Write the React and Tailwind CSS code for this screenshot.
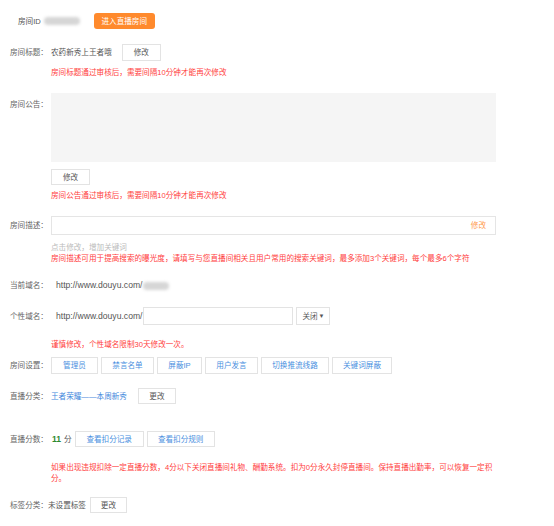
import React from 'react';

const Label = ({ children, className = '' }) => (
  <span className={`w-[41px] shrink-0 text-[#666] ${className}`}>{children}</span>
);

const GhostBtn = ({ children, className = '' }) => (
  <button className={`flex items-center justify-center border border-[#e3e3e3] bg-white text-[#555] ${className}`}>
    {children}
  </button>
);

const BlueBtn = ({ children, className = '' }) => (
  <button className={`flex items-center justify-center border border-[#e3e3e3] bg-white text-[#4a8fe0] ${className}`}>
    {children}
  </button>
);

const Blur = ({ className = '' }) => (
  <span className={`inline-block rounded-sm bg-[#d6d6d6] blur-[1.5px] ${className}`} />
);

const Warn = ({ children, className = '' }) => (
  <p className={`h-[11px] pl-[41px] leading-[11px] text-[#ff3d3d] ${className}`}>{children}</p>
);

export default function App() {
  const settings = [
    ['管理员', 'w-[47px]'],
    ['禁言名单', 'w-[53px]'],
    ['屏蔽IP', 'w-[45px]'],
    ['用户发言', 'w-[53px]'],
    ['切换推流线路', 'w-[68px]'],
    ['关键词屏蔽', 'w-[60px]'],
  ];

  return (
    <div
      className="h-[526px] w-[554px] overflow-hidden bg-white pl-[10px] text-[7.6px] leading-[11px]"
      style={{ fontFamily: '"Liberation Sans", "Noto Sans CJK SC", sans-serif' }}
    >
      {/* room id */}
      <div className="mt-[13px] flex h-[16px] items-center">
        <span className="ml-[8px] text-[#555]">房间ID</span>
        <Blur className="ml-[3px] h-[8px] w-[36px]" />
        <button className="ml-[14px] flex h-[16px] w-[61px] items-center justify-center rounded-[3px] bg-[#ff8a2d] text-white">
          进入直播房间
        </button>
      </div>

      {/* title */}
      <div className="mt-[15px] flex h-[17px] items-center">
        <Label>房间标题：</Label>
        <span className="text-[#555]">农药新秀上王者哦</span>
        <GhostBtn className="ml-[10px] h-[17px] w-[39px]">修改</GhostBtn>
      </div>
      <Warn className="mt-[6px]">房间标题通过审核后，需要间隔10分钟才能再次修改</Warn>

      {/* notice */}
      <div className="mt-[15px] flex">
        <Label className="pt-[6px]">房间公告：</Label>
        <div className="h-[69px] w-[445px] bg-[#f5f5f5]" />
      </div>
      <div className="mt-[7px] pl-[41px]">
        <GhostBtn className="h-[16px] w-[39px]">修改</GhostBtn>
      </div>
      <Warn className="mt-[5px]">房间公告通过审核后，需要间隔10分钟才能再次修改</Warn>

      {/* description */}
      <div className="mt-[15px] flex h-[19px] items-center">
        <Label>房间描述：</Label>
        <div className="flex h-[19px] w-[445px] items-center justify-end border border-[#e5e5e5] pr-[9px] text-[#ff9a4d]">
          修改
        </div>
      </div>
      <p className="mt-[7px] h-[11px] pl-[41px] text-[#bbb]">点击修改，增加关键词</p>
      <Warn>房间描述可用于提高搜索的曝光度，请填写与您直播间相关且用户常用的搜索关键词，最多添加3个关键词，每个最多6个字符</Warn>

      {/* current domain */}
      <div className="mt-[16px] flex h-[11px] items-center">
        <Label>当前域名：</Label>
        <span className="ml-[5px] text-[8.6px] text-[#555]">http://www.douyu.com/</span>
        <Blur className="ml-[1px] h-[8px] w-[26px]" />
      </div>

      {/* custom domain */}
      <div className="mt-[16px] flex h-[18px] items-center">
        <Label>个性域名：</Label>
        <span className="ml-[5px] text-[8.6px] text-[#555]">http://www.douyu.com/</span>
        <div className="ml-[1px] h-[18px] w-[150px] border border-[#e3e3e3]" />
        <div className="ml-[3px] flex h-[18px] w-[34px] items-center justify-between border border-[#e3e3e3] px-[5px] text-[#555]">
          <span>关闭</span>
          <span className="text-[6px]">▼</span>
        </div>
      </div>
      <Warn className="mt-[14px]">谨慎修改，个性域名限制30天修改一次。</Warn>

      {/* room settings */}
      <div className="mt-[7px] flex h-[17px] items-center">
        <Label>房间设置：</Label>
        <div className="flex gap-[3px]">
          {settings.map(([name, w]) => (
            <BlueBtn key={name} className={`h-[17px] ${w}`}>{name}</BlueBtn>
          ))}
        </div>
      </div>

      {/* category */}
      <div className="mt-[14px] flex h-[16px] items-center">
        <Label>直播分类：</Label>
        <span className="text-[#3f87dc]">王者荣耀——本周新秀</span>
        <GhostBtn className="ml-[11px] h-[16px] w-[38px]">更改</GhostBtn>
      </div>

      {/* score */}
      <div className="mt-[27px] flex h-[16px] items-center">
        <Label>直播分数：</Label>
        <span className="ml-[1px] text-[8.6px] font-semibold text-[#2f8a2f]">11</span>
        <span className="ml-[3px] text-[#555]">分</span>
        <BlueBtn className="ml-[3px] h-[16px] w-[69px]">查看扣分记录</BlueBtn>
        <BlueBtn className="ml-[3px] h-[16px] w-[68px]">查看扣分规则</BlueBtn>
      </div>
      <p className="mt-[15px] whitespace-nowrap pl-[41px] leading-[11px] text-[#ff3d3d]">
        如果出现违规扣除一定直播分数，4分以下关闭直播间礼物、酬勤系统。扣为0分永久封停直播间。保持直播出勤率，可以恢复一定积
        <br />
        分。
      </p>

      {/* tag */}
      <div className="mt-[13px] flex h-[16px] items-center">
        <span className="text-[#666]">标签分类：</span>
        <span className="text-[#555]">未设置标签</span>
        <GhostBtn className="ml-[4px] h-[16px] w-[37px]">更改</GhostBtn>
      </div>
    </div>
  );
}
